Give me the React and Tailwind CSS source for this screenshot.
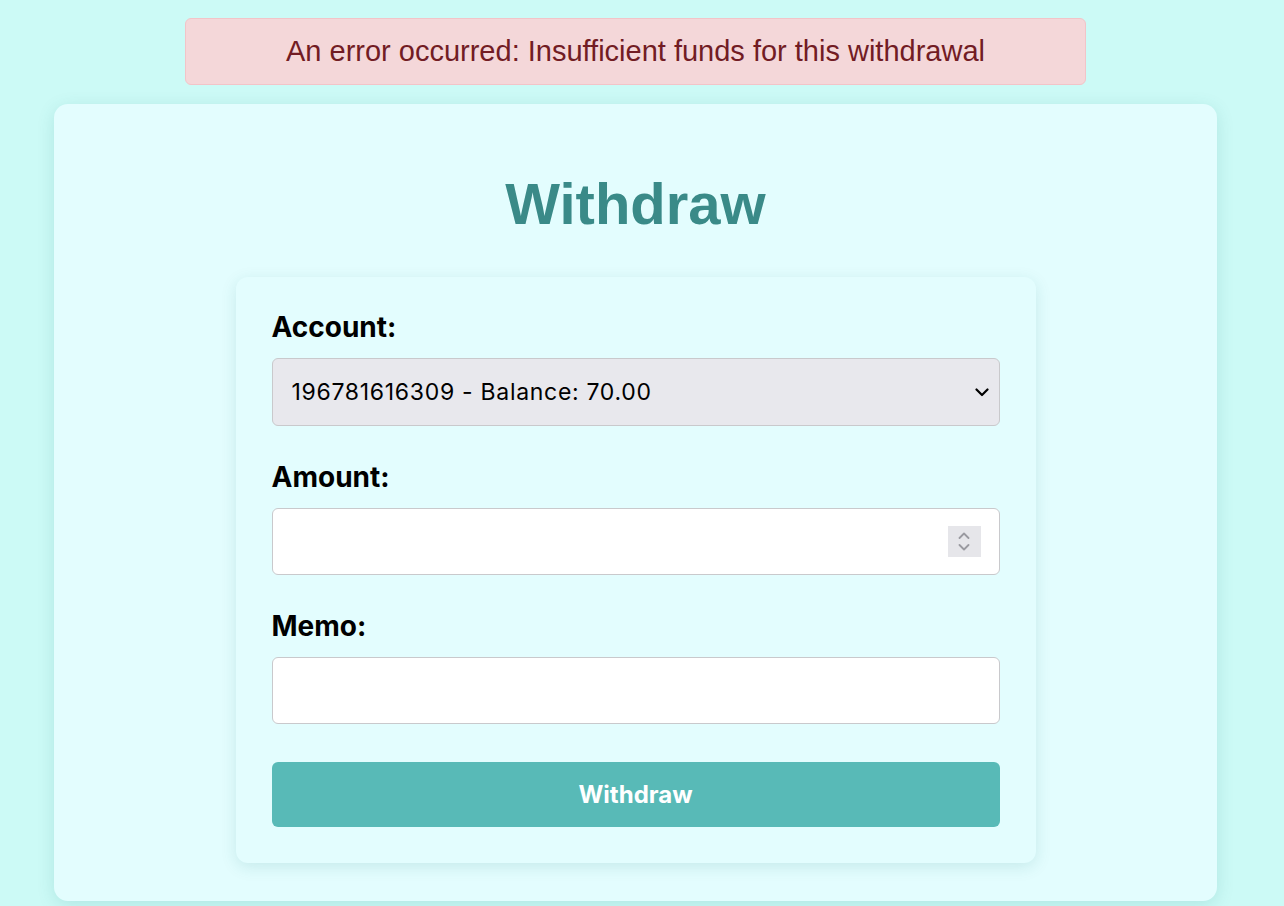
import React, { useState } from 'react';

const accounts = [{ id: '196781616309', balance: '70.00' }];

const labelClasses =
  'block text-[28px] leading-[32px] font-bold text-black mb-[15px] ' +
  "font-['Inter',sans-serif]";

const inputClasses =
  'w-full h-[67px] px-[20px] rounded-md border border-[#c9c9cc] bg-white ' +
  "text-[22px] font-['Inter',sans-serif] text-black outline-none";

const Spinner = () => (
  <div className="absolute right-[19px] top-[18px] w-[33px] h-[31px] bg-[#e6e6ea] flex flex-col items-center justify-center gap-[5px]">
    <svg width="12" height="7" viewBox="0 0 12 7" fill="none">
      <path d="M1.5 6L6 1.5L10.5 6" stroke="#9a9aa0" strokeWidth="1.8" strokeLinecap="round" strokeLinejoin="round" />
    </svg>
    <svg width="12" height="7" viewBox="0 0 12 7" fill="none">
      <path d="M1.5 1L6 5.5L10.5 1" stroke="#9a9aa0" strokeWidth="1.8" strokeLinecap="round" strokeLinejoin="round" />
    </svg>
  </div>
);

const App = () => {
  const [account, setAccount] = useState(accounts[0].id);
  const [amount, setAmount] = useState('');
  const [memo, setMemo] = useState('');

  return (
    <div className="min-h-screen bg-[#ccfaf6] pt-[18px] pr-[13px]">
      {/* error banner */}
      <div className="mx-auto w-[901px] h-[67px] flex items-center justify-center rounded-md border border-[#f2c4c8] bg-[#f4d7d9]">
        <p className="text-[29px] text-[#721c24] font-['Liberation_Sans',Arial,sans-serif]">
          An error occurred: Insufficient funds for this withdrawal
        </p>
      </div>

      <div className="mx-[54px] mt-[19px] rounded-[14px] bg-[#e3fdfe] shadow-[0_4px_18px_rgba(0,110,110,0.14)] pt-[65px] pb-[38px]">
        <h1 className="text-center text-[58px] leading-[70px] font-bold text-[#3a8a88] font-['Liberation_Sans',Arial,sans-serif]">
          Withdraw
        </h1>

        <form
          className="mx-auto mt-[38px] w-[800px] rounded-xl bg-[#e3fdfe] shadow-[0_4px_16px_rgba(0,110,110,0.13)] px-[36px] pt-[34px] pb-[36px]"
          onSubmit={e => e.preventDefault()}
        >
          <div className="mb-[35px]">
            <label className={labelClasses}>Account:</label>
            <div className="relative">
              <select
                value={account}
                onChange={e => setAccount(e.target.value)}
                className="w-full h-[68px] appearance-none px-[19px] rounded-md border border-[#c9c9cc] bg-[#e8e8ed] text-[23px] tracking-[0.7px] text-black font-['Inter',sans-serif] outline-none"
              >
                {accounts.map(a => (
                  <option key={a.id} value={a.id}>
                    {a.id} - Balance: {a.balance}
                  </option>
                ))}
              </select>
              <svg
                className="absolute right-[11px] top-[30px] pointer-events-none"
                width="14"
                height="9"
                viewBox="0 0 14 9"
                fill="none"
              >
                <path d="M1.5 1.5L7 7L12.5 1.5" stroke="#000" strokeWidth="2.2" strokeLinecap="round" strokeLinejoin="round" />
              </svg>
            </div>
          </div>

          <div className="mb-[35px]">
            <label className={labelClasses}>Amount:</label>
            <div className="relative">
              <input
                type="text"
                value={amount}
                onChange={e => setAmount(e.target.value)}
                className={inputClasses}
              />
              <Spinner />
            </div>
          </div>

          <div className="mb-[38px]">
            <label className={labelClasses}>Memo:</label>
            <input
              type="text"
              value={memo}
              onChange={e => setMemo(e.target.value)}
              className={inputClasses}
            />
          </div>

          <button
            type="submit"
            className="w-full h-[65px] rounded-md bg-[#58bab7] text-white text-[24px] font-bold font-['Inter',sans-serif]"
          >
            Withdraw
          </button>
        </form>
      </div>
    </div>
  );
};

export default App;
